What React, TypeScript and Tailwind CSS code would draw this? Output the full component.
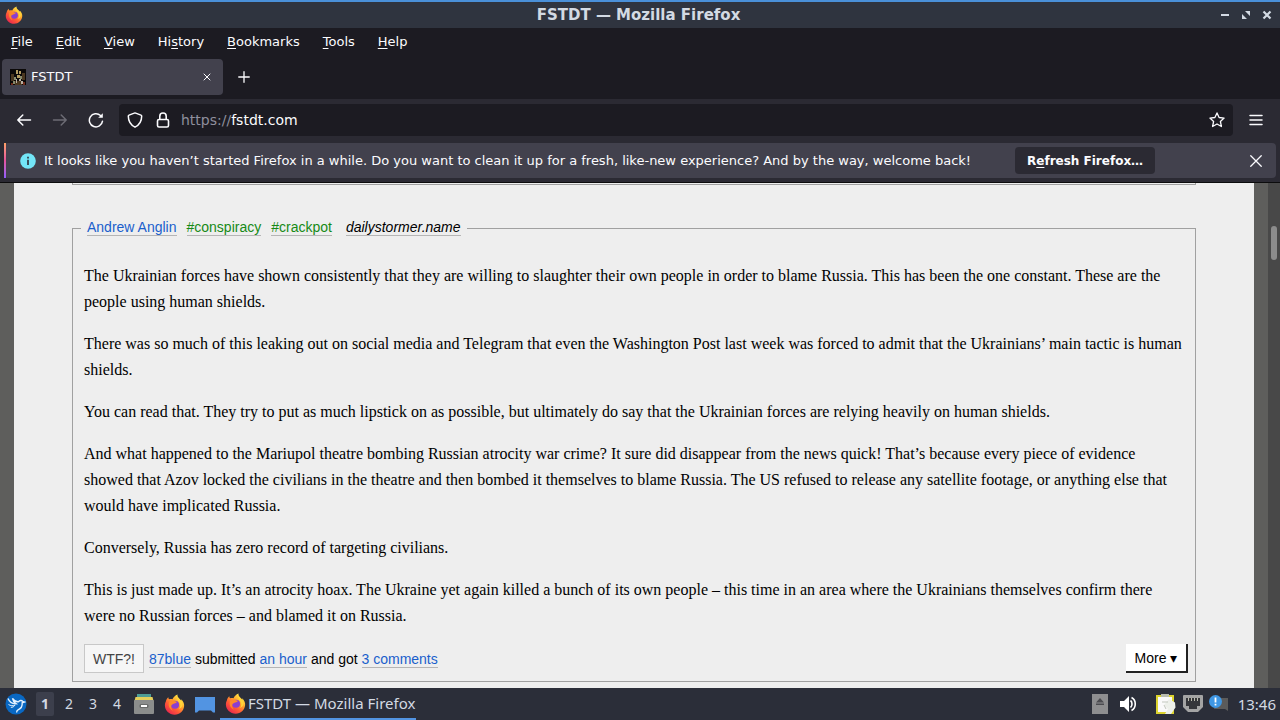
import { useId, useState } from 'react'
import type { ReactNode } from 'react'

const MENUS = [
  { before: '', key: 'F', after: 'ile' },
  { before: '', key: 'E', after: 'dit' },
  { before: '', key: 'V', after: 'iew' },
  { before: 'Hi', key: 's', after: 'tory' },
  { before: '', key: 'B', after: 'ookmarks' },
  { before: '', key: 'T', after: 'ools' },
  { before: '', key: 'H', after: 'elp' },
]

const PARAGRAPHS = [
  'The Ukrainian forces have shown consistently that they are willing to slaughter their own people in order to blame Russia. This has been the one constant. These are the people using human shields.',
  'There was so much of this leaking out on social media and Telegram that even the Washington Post last week was forced to admit that the Ukrainians’ main tactic is human shields.',
  'You can read that. They try to put as much lipstick on as possible, but ultimately do say that the Ukrainian forces are relying heavily on human shields.',
  'And what happened to the Mariupol theatre bombing Russian atrocity war crime? It sure did disappear from the news quick! That’s because every piece of evidence showed that Azov locked the civilians in the theatre and then bombed it themselves to blame Russia. The US refused to release any satellite footage, or anything else that would have implicated Russia.',
  'Conversely, Russia has zero record of targeting civilians.',
  'This is just made up. It’s an atrocity hoax. The Ukraine yet again killed a bunch of its own people – this time in an area where the Ukrainians themselves confirm there were no Russian forces – and blamed it on Russia.',
]

function FirefoxIcon({ className }: { className: string }) {
  const id = useId()
  return (
    <svg viewBox="0 0 24 24" className={className} aria-hidden="true">
      <defs>
        <linearGradient id={id} x1="0.85" y1="0.1" x2="0.2" y2="0.95">
          <stop offset="0" stopColor="#fff04a" />
          <stop offset="0.35" stopColor="#ffa62b" />
          <stop offset="0.65" stopColor="#ff5a36" />
          <stop offset="1" stopColor="#e8264f" />
        </linearGradient>
      </defs>
      <path
        d="M2.2 8.2C2.6 6.4 3.6 4.7 5 3.6c0 1 .2 1.7.8 2.3 1.3-.4 2.6-.4 3.9 0C10.700 3.600 12.800 1.600 15.400.6c-.2 1.900.7 3.400 2.300 4.800.9.8 1.500 1.600 1.900 2.500.2-.7.1-1.300-.1-2C22 8 23.300 10.800 23 13.700 22.600 19.300 17.900 23.700 12.200 23.700 6 23.700 1 18.900 1 12.900c0-1.700.4-3.300 1.200-4.700z"
        fill={`url(#${id})`}
      />
      <circle cx="12.600" cy="12.300" r="4.600" fill="#8a3fd1" />
      <path d="M8.500 12.800c1-1.400 2.700-1.700 4.300-2.300 1.200-.5 2-1 1.900-1.700-1.600-.2-2.700-.3-3.500-1.300-1.700-.5-3.700-.1-5 1.200-2 3.500-.3 9 4.300 10.400-2-1.700-3-4.300-2-6.300z" fill="#ff8a2a" />
      <path d="M15.600 3.800c-1 2.400.2 4 1.800 5.600 1.900 2 1.700 5.800-.6 7.600 3.500-.6 5.300-4.200 4-7.500-1-2.500-4-3.300-5.200-5.700z" fill="#ffd43a" />
    </svg>
  )
}

function Favicon() {
  return (
    <svg viewBox="0 0 16 16" className="size-4" aria-hidden="true">
      <path fill="#0b0908" d="M0 0h16v16H0z" />
      <path fill="#4b3820" d="M1 5h3v7H1zM12 4h3v7h-3zM5 12h7v4H5z" />
      <path fill="#b39c62" d="M6 1h2v4H6zM9 2h2v3H9zM7 6h3v3H7z" />
      <path fill="#85896c" d="M4 8h2v3H4zM10 7h2v3h-2zM3 12h2v3H3z" />
      <path fill="#b8afa2" d="M6 10h1v4H6zM9 10h2v2H9zM11 12h2v3h-2z" />
      <path fill="#6f2b1a" d="M1 14h2v2H1zM13 13h2v3h-2z" />
    </svg>
  )
}

function Line({ d, className, width = 1.5 }: { d: string; className: string; width?: number }) {
  return (
    <svg
      viewBox="0 0 16 16"
      className={className}
      fill="none"
      stroke="currentColor"
      strokeWidth={width}
      strokeLinecap="round"
      strokeLinejoin="round"
      aria-hidden="true"
    >
      <path d={d} />
    </svg>
  )
}

function TitleBar() {
  return (
    <header className="flex h-7 items-center border-t-2 border-[#4a90d9] bg-[#2f343f] px-[5px]">
      <div className="flex-1">
        <FirefoxIcon className="size-[18px]" />
      </div>
      <h1 className="text-[15px] font-bold text-[#d3dae3]">FSTDT — Mozilla Firefox</h1>
      <div className="flex flex-1 items-center justify-end gap-[11px] pr-[3px] text-[#d3dae3]">
        <button type="button" aria-label="Minimize">
          <svg viewBox="0 0 10 10" className="size-[10px]">
            <path d="M1 4h8v2H1z" fill="currentColor" />
          </svg>
        </button>
        <button type="button" aria-label="Restore">
          <svg viewBox="0 0 10 10" className="size-[10px]">
            <path d="M4 1h5v5zM1 4v5h5z" fill="currentColor" />
          </svg>
        </button>
        <button type="button" aria-label="Close window">
          <svg viewBox="0 0 10 10" className="size-[10px]">
            <path d="M1.500 1.500l7 7M8.500 1.500l-7 7" stroke="currentColor" strokeWidth="2.200" />
          </svg>
        </button>
      </div>
    </header>
  )
}

function MenuBar() {
  return (
    <nav className="flex h-[27px] items-center gap-[23px] bg-[#1c1b22] px-[11px] text-[#fbfbfe]">
      {MENUS.map((m) => (
        <button key={m.key} type="button">
          {m.before}
          <span className="underline underline-offset-2">{m.key}</span>
          {m.after}
        </button>
      ))}
    </nav>
  )
}

function TabStrip() {
  return (
    <div className="flex h-11 items-center bg-[#1c1b22] px-[2px] text-[#fbfbfe]">
      <div className="flex h-9 w-[221px] items-center rounded-[4px] bg-[#42414d] px-2">
        <Favicon />
        <span className="ml-[5px] flex-1">FSTDT</span>
        <button type="button" aria-label="Close tab" className="p-1">
          <Line d="M2 2l12 12M14 2L2 14" className="size-2" width={2} />
        </button>
      </div>
      <button type="button" aria-label="New tab" className="ml-[14px]">
        <Line d="M8 2v12M2 8h12" className="size-[14px]" />
      </button>
    </div>
  )
}

function NavBar() {
  const [url, setUrl] = useState('fstdt.com')
  return (
    <div className="flex h-11 items-center bg-[#2b2a33] px-4 pb-[3px] text-[#fbfbfe]">
      <div className="flex items-center gap-5">
        <button type="button" aria-label="Back">
          <Line d="M14.500 8H1.800M6.800 3L1.800 8l5 5" className="size-4" />
        </button>
        <button type="button" aria-label="Forward" className="text-[#6d6c75]">
          <Line d="M1.500 8h12.700M9.200 3l5 5-5 5" className="size-4" />
        </button>
        <button type="button" aria-label="Reload">
          <svg viewBox="0 0 16 16" className="size-4" fill="none" stroke="currentColor" strokeWidth="1.500" strokeLinecap="round" aria-hidden="true">
            <path d="M14.500 9.200A6.600 6.600 0 1 1 12.500 3.500" />
            <path d="M14.800 1.200v4.600h-4.600z" fill="currentColor" stroke="none" />
          </svg>
        </button>
      </div>
      <div className="ml-[15px] flex h-8 flex-1 items-center rounded-[4px] bg-[#1c1b22] px-2">
        <Line d="M8 .9l6 2.200c.500.200.700.500.700 1C14.700 9 12.500 13 8 15.200 3.500 13 1.300 9 1.300 4.100c0-.5.200-.8.700-1z" className="size-4" />
        <svg viewBox="0 0 16 16" className="ml-3 size-4" fill="none" stroke="currentColor" strokeWidth="1.600" aria-hidden="true">
          <rect x="2.500" y="7.500" width="11" height="7.500" rx="1.500" />
          <path d="M4.800 7.500V4.200a3.200 3.200 0 0 1 6.400 0v3.300" />
        </svg>
        <label htmlFor="url" className="ml-[10px] text-[14px] text-[#8f8f9d]">
          https://
        </label>
        <input
          id="url"
          className="min-w-0 flex-1 bg-transparent text-[14px] outline-none"
          value={url}
          onChange={(e) => setUrl(e.target.value)}
        />
        <button type="button" aria-label="Bookmark this page">
          <Line d="M8 .9l2.100 4.600 5 .6-3.700 3.400 1 5L8 12l-4.400 2.500 1-5L.9 6.100l5-.6z" className="size-4" width={1.300} />
        </button>
      </div>
      <button type="button" aria-label="Application menu" className="ml-[15px]">
        <Line d="M2 3.500h12M2 8h12M2 12.500h12" className="size-4" />
      </button>
    </div>
  )
}

function Notification() {
  return (
    <div className="border-b border-[#0c0c0d] bg-[#2b2a33] px-1 pb-1">
      <div className="flex h-[35px] items-center rounded-[4px] bg-[#42414d] pr-[13px] text-[#fbfbfe]">
        <div className="h-full w-[2px] bg-linear-to-b from-[#ffa265] via-[#e5529c] to-[#9059ff]" />
        <svg viewBox="0 0 16 16" className="ml-[14px] size-4" aria-hidden="true">
          <circle cx="8" cy="8" r="7.800" fill="#73e5f7" />
          <path d="M7.200 3.800h1.600v1.600H7.200zM7.200 6.800h1.600v5.200H7.200z" fill="#2b2a33" />
        </svg>
        <p className="ml-2 whitespace-nowrap">
          It looks like you haven’t started Firefox in a while. Do you want to clean it up for a fresh, like-new
          experience? And by the way, welcome back!
        </p>
        <button type="button" className="ml-11 h-[27px] w-[140px] rounded-[4px] bg-[#2b2a33] text-[12px] font-bold whitespace-nowrap">
          R<span className="underline underline-offset-2">e</span>fresh Firefox…
        </button>
        <button type="button" aria-label="Dismiss" className="ml-auto">
          <Line d="M2 2l12 12M14 2L2 14" className="size-[14px]" />
        </button>
      </div>
    </div>
  )
}

function PageLink({ className, children }: { className: string; children: ReactNode }) {
  return (
    <a href="#post" className={`border-b border-[#b5b5b5] ${className}`}>
      {children}
    </a>
  )
}

function Post() {
  return (
    <fieldset id="post" className="min-w-0 border border-[#a0a0a0] px-[11px] pb-2">
      <legend className="-ml-[3px] flex gap-[10px] px-[6px] pb-[2px] font-['Liberation_Sans',Arial,sans-serif] text-[14px] leading-4">
        <PageLink className="text-[#1a5fcc]">Andrew Anglin</PageLink>
        <PageLink className="text-[#168a16]">#conspiracy</PageLink>
        <PageLink className="text-[#168a16]">#crackpot</PageLink>
        <PageLink className="ml-1 text-black italic">dailystormer.name</PageLink>
      </legend>
      <div className="mt-[25px] space-y-4 font-['Liberation_Serif','Times_New_Roman',serif] text-[16px] leading-[26px]">
        {PARAGRAPHS.map((p) => (
          <p key={p}>{p}</p>
        ))}
      </div>
      <div className="mt-[15px] flex items-center font-['Liberation_Sans',Arial,sans-serif] text-[14px] leading-4">
        <button type="button" className="h-[29px] w-[60px] border border-[#c8c8c8] bg-[#f6f6f6] text-[#444]">
          WTF?!
        </button>
        <p className="ml-[5px]">
          <PageLink className="text-[#1a5fcc]">87blue</PageLink> submitted{' '}
          <PageLink className="text-[#1a5fcc]">an hour</PageLink> and got{' '}
          <PageLink className="text-[#1a5fcc]">3 comments</PageLink>
        </p>
        <button
          type="button"
          className="-mr-1 ml-auto h-[29px] w-[62px] border-r-2 border-b-2 border-[#222] bg-white"
        >
          More ▾
        </button>
      </div>
    </fieldset>
  )
}

function Page() {
  return (
    <main className="flex min-h-0 flex-1 overflow-hidden bg-[#5e5e5c] pl-[14px]">
      <div className="flex-1 bg-[#eeeeee] px-[58px] text-black">
        {/* tail of the previous post, scrolled off the top */}
        <div className="h-[2px] border-x border-b border-[#a0a0a0]" />
        <div className="mt-[34px]">
          <Post />
        </div>
      </div>
      <div className="ml-[14px] w-3 bg-[#484848]">
        <div className="mt-[43px] ml-[3px] h-[34px] w-[6px] rounded-full bg-[#8c8c8c]" />
      </div>
    </main>
  )
}

function Taskbar() {
  return (
    <footer className="flex h-8 items-center bg-[#2b2e39] pr-1 pl-[5px] font-['Noto_Sans','Open_Sans',sans-serif] text-[15px] text-[#d3dae3]">
      <button type="button" aria-label="Start menu">
        <svg viewBox="0 0 22 22" className="size-[22px]" aria-hidden="true">
          <circle cx="11" cy="11" r="10.500" fill="#0968c3" />
          <path
            d="M3 5.500c1.500 3.500 4.500 5.500 8 5.200C9 9.500 7.800 7.500 7.500 5.500c1.800 2.500 4 3.500 6 3.200 1.200-1.500 3-1.600 4.200-.4l1.800.7-2.300.8c.3 3.700-1.400 6-4.200 7-1.200.6-1.500 1.500-1.200 2.700"
            fill="none"
            stroke="#e4f1fd"
            strokeWidth="1.400"
          />
          <path d="M3.500 11.500c2.200 1.500 4.500 1.500 6.500.6-1 1.700-2.500 2.400-4.200 2.200" fill="none" stroke="#e4f1fd" />
        </svg>
      </button>
      <div className="ml-[9px] flex gap-[6px] text-[14px]">
        <button type="button" className="h-6 w-[18px] rounded-[2px] bg-[#3c3f4c] font-bold">
          1
        </button>
        <button type="button" className="h-6 w-[18px]">2</button>
        <button type="button" className="h-6 w-[18px]">3</button>
        <button type="button" className="h-6 w-[18px]">4</button>
      </div>
      <div className="ml-2 flex items-center gap-[10px]">
        <button type="button" aria-label="File manager">
          <svg viewBox="0 0 20 20" className="size-5" aria-hidden="true">
            <path d="M3 0h14v4H3z" fill="#4e9d95" />
            <path d="M1.500 3h17l1 4H.5z" fill="#e5cf5b" />
            <rect y="6" width="20" height="14" rx="1" fill="#8b8d8c" />
            <rect x="5.500" y="10" width="9" height="4" rx="1.500" fill="#696b6a" />
            <path d="M7 11h6v2H7z" fill="#fff" />
          </svg>
        </button>
        <button type="button" aria-label="Firefox">
          <FirefoxIcon className="size-[21px]" />
        </button>
        <button type="button" aria-label="Show desktop">
          <svg viewBox="0 0 20 20" className="size-5" aria-hidden="true">
            <path d="M0 3h20v15.500h-2l-2-2H4l-2 2H0z" fill="#5294e2" />
          </svg>
        </button>
      </div>
      <button type="button" className="ml-[5px] flex h-full w-[196px] items-center gap-[2px] border-b-2 border-[#5294e2] pl-[5px] whitespace-nowrap">
        <FirefoxIcon className="size-[21px]" />
        FSTDT — Mozilla Firefox
      </button>
      <div className="ml-auto flex items-center">
        <svg viewBox="0 0 16 20" className="h-5 w-4" aria-hidden="true">
          <path d="M0 0h16v20H0z" fill="#8e8e90" />
          <path d="M8 4l4 4.500H4zM4 9.500h8V11H4z" fill="#4b4b50" />
        </svg>
        <svg viewBox="0 0 17 16" className="ml-3 h-4 w-[17px]" aria-hidden="true">
          <path d="M0 5h4l5-5v16l-5-5H0z" fill="#fff" />
          <path d="M10.500 4.500c2 1.500 2 5.500 0 7M11.500 1.500c5 2.500 5 10.500 0 13" fill="none" stroke="#fff" strokeWidth="1.600" />
        </svg>
        <svg viewBox="0 0 20 20" className="ml-[19px] size-5" aria-hidden="true">
          <path d="M0 1h18v19H0z" fill="#dcd32e" />
          <path d="M2 3h14v15H2z" fill="#fafafa" />
          <path d="M5 0h8v3H5z" fill="#b9bcae" />
          <path d="M13 5l6 3.500.5 5L15 20H9l3-5-4-4z" fill="#edf0ea" />
          <path d="M6 8h6M8 11l2 4" stroke="#c2c7bd" />
        </svg>
        <svg viewBox="0 0 20 18" className="ml-[7px] h-[18px] w-5" aria-hidden="true">
          <path d="M1 0h18a1 1 0 0 1 1 1v11l-5 5H5l-5-5V1a1 1 0 0 1 1-1z" fill="#a4a4a4" />
          <path d="M3 3h14v8h-3v3H6v-3H3z" fill="#35363a" />
          <path d="M5.500 3v3M8.500 3v3M11.500 3v3M14.500 3v3" stroke="#bdbdaf" />
        </svg>
        <svg viewBox="0 0 20 18" className="ml-[6px] h-[18px] w-5" aria-hidden="true">
          <path d="M7 3h12v13l-3-2H5z" fill="#5b5b5b" />
          <circle cx="6.500" cy="6.500" r="6.500" fill="#3f97e4" />
          <path d="M5.600 2.500h1.800v5H5.600zM5.600 8.800h1.800v1.800H5.600z" fill="#fff" />
        </svg>
        <time className="ml-[9px]">13:46</time>
      </div>
    </footer>
  )
}

export default function App() {
  return (
    <div className="flex h-screen flex-col overflow-hidden bg-[#1c1b22] font-['DejaVu_Sans',Verdana,sans-serif] text-[13px] leading-5">
      <TitleBar />
      <MenuBar />
      <TabStrip />
      <NavBar />
      <Notification />
      <Page />
      <Taskbar />
    </div>
  )
}
